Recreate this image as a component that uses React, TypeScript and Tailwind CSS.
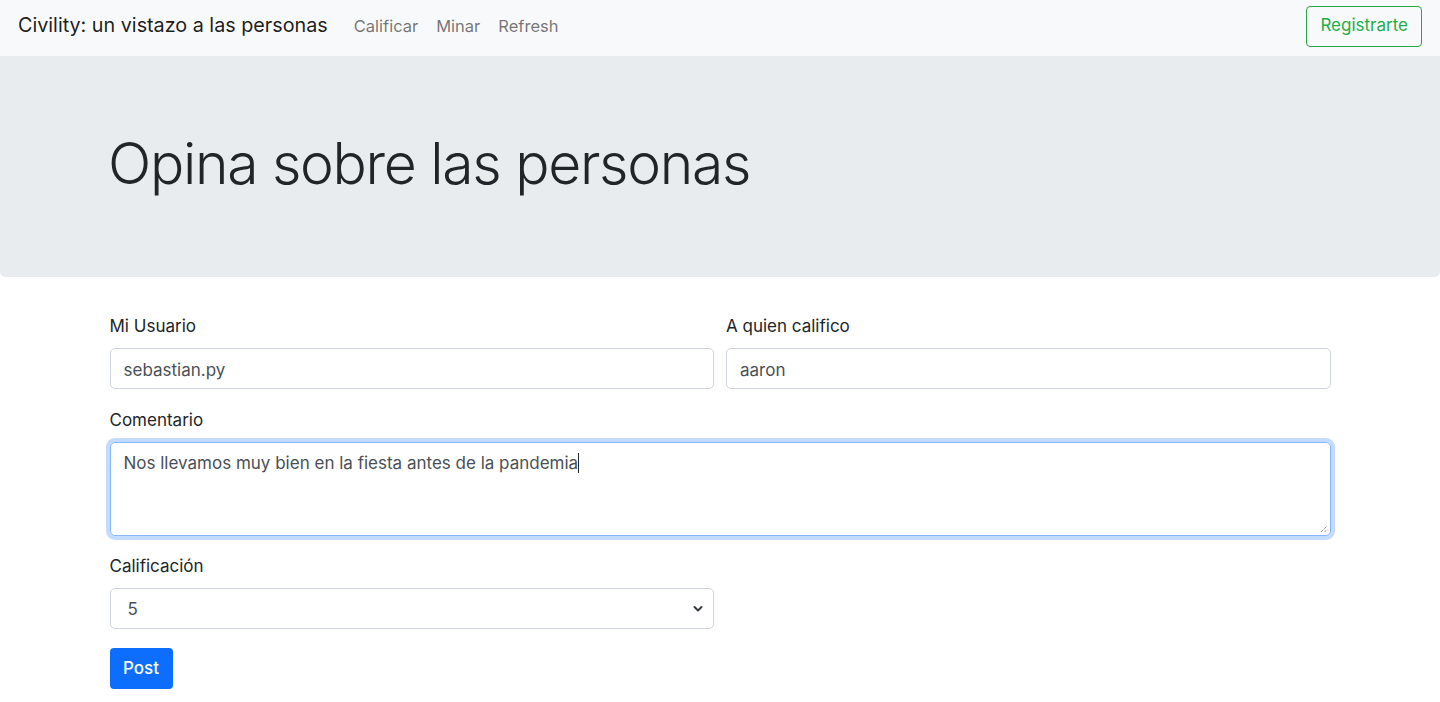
import React from "react";

export default function App() {
  const font = { fontFamily: "Inter, 'Liberation Sans', sans-serif" };
  return (
    <div className="min-h-[702px] bg-white text-[#212529]" style={font}>
      <nav className="h-[56px] bg-[#f8f9fa] flex items-center pl-[18px] pr-[18px] pb-[4px]">
        <span className="text-[19.75px] text-[rgba(0,0,0,0.9)] mr-[26px]">Civility: un vistazo a las personas</span>
        <div className="flex gap-[18px] text-[16.5px] text-[rgba(0,0,0,0.55)]">
          <span>Calificar</span>
          <span>Minar</span>
          <span>Refresh</span>
        </div>
        <div className="ml-auto">
          <button className="h-[41px] px-[13px] border border-[#28a745] text-[#1fae48] rounded-[4px] text-[17px]">
            Registrarte
          </button>
        </div>
      </nav>
      <header className="h-[221px] bg-[#e9ecef] rounded-b-[5px] flex items-center pb-[6px]">
        <h1 className="ml-[108px] text-[57px] font-light tracking-[-1.3px] text-[#212529]">Opina sobre las personas</h1>
      </header>
      <form className="w-[1221px] mx-auto pt-[37px]">
        <div className="grid grid-cols-2 gap-[12px]">
          <div>
            <label className="block text-[17px] leading-[24px] mb-[10px]">Mi Usuario</label>
            <input
              readOnly
              defaultValue="sebastian.py"
              className="w-full h-[41px] px-[13px] pt-[2px] border border-[#ced4da] rounded-[5px] text-[17px] text-[#495057] outline-none"
            />
          </div>
          <div>
            <label className="block text-[17px] leading-[24px] mb-[10px]">A quien califico</label>
            <input
              readOnly
              defaultValue="aaron"
              className="w-full h-[41px] px-[13px] pt-[2px] border border-[#ced4da] rounded-[5px] text-[17px] text-[#495057] outline-none"
            />
          </div>
        </div>
        <div className="mt-[19px]">
          <label className="block text-[17px] leading-[24px] mb-[10px]">Comentario</label>
          <div className="relative h-[94px] px-[13px] py-[7px] border border-[#86b7fe] rounded-[5px] text-[17px] leading-[26px] text-[#495057] shadow-[0_0_0_4px_rgba(13,110,253,0.25)]">
            <span>Nos llevamos muy bien en la fiesta antes de la pandemia</span>
            <span className="inline-block w-[1px] h-[20px] bg-[#212529] align-[-4px]" />
            <svg className="absolute right-[2px] bottom-[2px]" width="8" height="8" viewBox="0 0 8 8">
              <path d="M1 7 L7 1 M4.5 7 L7 4.5" stroke="#666" strokeWidth="1" strokeDasharray="1 1" />
            </svg>
          </div>
        </div>
        <div className="mt-[18px] w-[604px]">
          <label className="block text-[17px] leading-[24px] mb-[10px]">Calificación</label>
          <div className="relative h-[41px] border border-[#ced4da] rounded-[5px] flex items-center pl-[17px] pt-[2px] text-[17px] text-[#495057]">
            <span>5</span>
            <svg className="absolute right-[10px] top-1/2 -translate-y-1/2" width="10" height="7" viewBox="0 0 10 7">
              <path d="M1.5 1.5 L5 5 L8.5 1.5" fill="none" stroke="#343a40" strokeWidth="2" strokeLinecap="round" strokeLinejoin="round" />
            </svg>
          </div>
        </div>
        <button type="button" className="mt-[19px] h-[41px] w-[63px] bg-[#0d6efd] text-white rounded-[4px] text-[17px] font-medium">
          Post
        </button>
      </form>
    </div>
  );
}
